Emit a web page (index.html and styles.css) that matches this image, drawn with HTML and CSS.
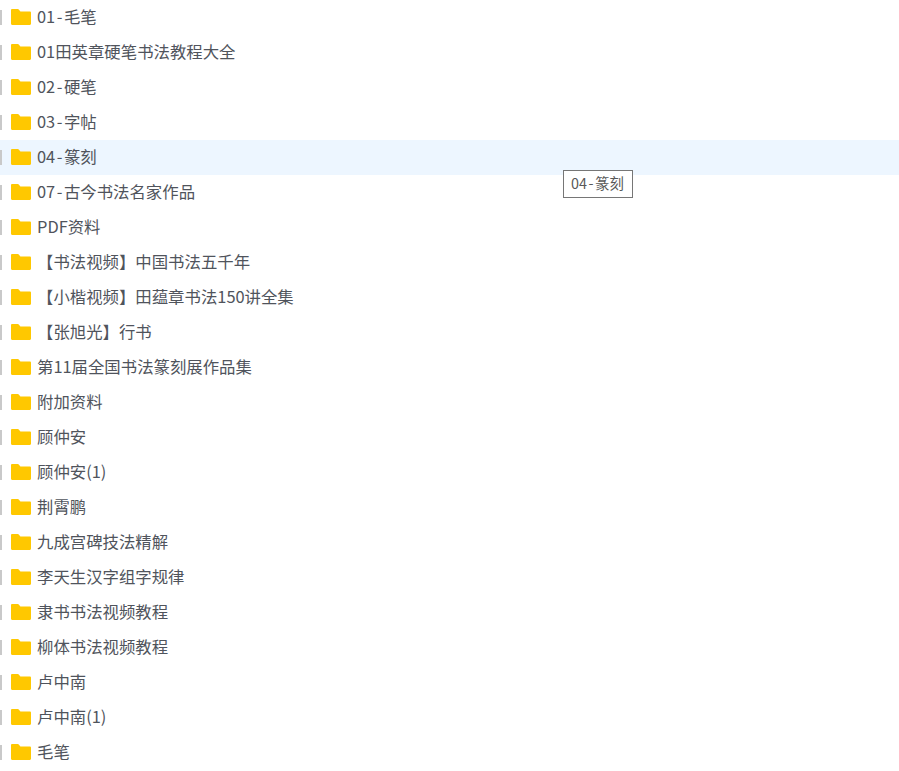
FILE: index.html
```html
<!DOCTYPE html>
<html lang="zh-CN">
<head>
<meta charset="utf-8">
<title>文件列表</title>
<link rel="stylesheet" href="styles.css">
</head>
<body>
<svg class="defs" width="0" height="0" aria-hidden="true"><defs><symbol id="folder" viewBox="0 0 20 16"><path d="M0 1.2C0 .5.5 0 1.2 0h5.6c.4 0 .7.2 1 .5L9.4 2.4h9.4c.7 0 1.2.5 1.2 1.2v11.2c0 .7-.5 1.2-1.2 1.2H1.2C.5 16 0 15.500 0 14.800z" fill="#ffc800"/></symbol></defs></svg>
<ul class="list">
<li class="row"><span class="check"></span><svg class="folder"><use href="#folder"/></svg><span class="name">01<span class="dash">-</span>毛笔</span></li>
<li class="row"><span class="check"></span><svg class="folder"><use href="#folder"/></svg><span class="name">01田英章硬笔书法教程大全</span></li>
<li class="row"><span class="check"></span><svg class="folder"><use href="#folder"/></svg><span class="name">02<span class="dash">-</span>硬笔</span></li>
<li class="row"><span class="check"></span><svg class="folder"><use href="#folder"/></svg><span class="name">03<span class="dash">-</span>字帖</span></li>
<li class="row hover"><span class="check"></span><svg class="folder"><use href="#folder"/></svg><span class="name">04<span class="dash">-</span>篆刻</span><span class="tooltip">04<span class="dash">-</span>篆刻</span></li>
<li class="row"><span class="check"></span><svg class="folder"><use href="#folder"/></svg><span class="name">07<span class="dash">-</span>古今书法名家作品</span></li>
<li class="row"><span class="check"></span><svg class="folder"><use href="#folder"/></svg><span class="name">PDF资料</span></li>
<li class="row"><span class="check"></span><svg class="folder"><use href="#folder"/></svg><span class="name">【书法视频】中国书法五千年</span></li>
<li class="row"><span class="check"></span><svg class="folder"><use href="#folder"/></svg><span class="name">【小楷视频】田蕴章书法150讲全集</span></li>
<li class="row"><span class="check"></span><svg class="folder"><use href="#folder"/></svg><span class="name">【张旭光】行书</span></li>
<li class="row"><span class="check"></span><svg class="folder"><use href="#folder"/></svg><span class="name">第11届全国书法篆刻展作品集</span></li>
<li class="row"><span class="check"></span><svg class="folder"><use href="#folder"/></svg><span class="name">附加资料</span></li>
<li class="row"><span class="check"></span><svg class="folder"><use href="#folder"/></svg><span class="name">顾仲安</span></li>
<li class="row"><span class="check"></span><svg class="folder"><use href="#folder"/></svg><span class="name">顾仲安(1)</span></li>
<li class="row"><span class="check"></span><svg class="folder"><use href="#folder"/></svg><span class="name">荆霄鹏</span></li>
<li class="row"><span class="check"></span><svg class="folder"><use href="#folder"/></svg><span class="name">九成宫碑技法精解</span></li>
<li class="row"><span class="check"></span><svg class="folder"><use href="#folder"/></svg><span class="name">李天生汉字组字规律</span></li>
<li class="row"><span class="check"></span><svg class="folder"><use href="#folder"/></svg><span class="name">隶书书法视频教程</span></li>
<li class="row"><span class="check"></span><svg class="folder"><use href="#folder"/></svg><span class="name">柳体书法视频教程</span></li>
<li class="row"><span class="check"></span><svg class="folder"><use href="#folder"/></svg><span class="name">卢中南</span></li>
<li class="row"><span class="check"></span><svg class="folder"><use href="#folder"/></svg><span class="name">卢中南(1)</span></li>
<li class="row"><span class="check"></span><svg class="folder"><use href="#folder"/></svg><span class="name">毛笔</span></li>
</ul>
</body>
</html>
```
FILE: styles.css
```css
html, body {
  margin: 0;
  padding: 0;
  height: 100%;
  overflow: hidden;
  background: #fff;
}
.defs { display: block; height: 0; }
.list {
  list-style: none;
  margin: 0;
  padding: 0;
  font-family: "Noto Sans CJK SC", "Noto Sans", sans-serif;
  font-size: 16.4px;
  color: #50545c;
}
.row {
  position: relative;
  display: flex;
  align-items: center;
  height: 35px;
}
.hover { background: #edf6ff; }
.check {
  width: 2px;
  height: 15px;
  margin-right: 9px;
  background: #c9c9c9;
  flex: none;
}
.folder {
  width: 20px;
  height: 16px;
  margin-right: 6px;
  margin-top: -2px;
  flex: none;
}
.name {
  white-space: nowrap;
  margin-top: -3px;
}
.dash {
  margin: 0 1.500px;
}
.tooltip {
  position: absolute;
  left: 563px;
  top: 30px;
  width: 70px;
  height: 28px;
  box-sizing: border-box;
  border: 1px solid #767676;
  background: #fff;
  font-size: 14.4px;
  line-height: 24px;
  padding-left: 7px;
  color: #585858;
  white-space: nowrap;
}
```
